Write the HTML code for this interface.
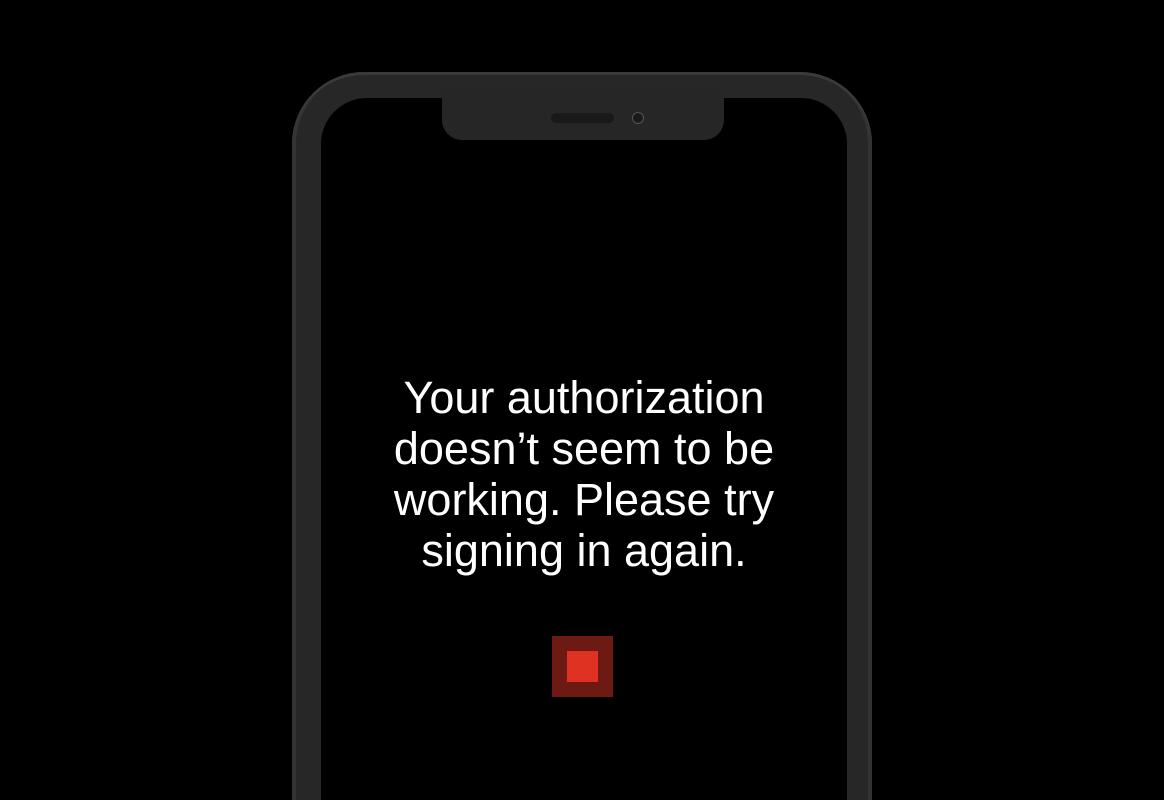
<!DOCTYPE html>
<html><head><style>
html,body{margin:0;padding:0;background:#000;width:1164px;height:800px;overflow:hidden;position:relative;font-family:"Liberation Sans",sans-serif}
.phone{position:absolute;left:292px;top:72px;width:580px;height:728px;border-radius:72px 72px 0 0;background:#272727;box-shadow:inset 0 3px 0 #3a3a3a, inset 4px 0 0 #333, inset -4px 0 0 #333}
.screen{position:absolute;left:321px;top:98px;width:526px;height:702px;background:#000;border-radius:46px 46px 0 0}
.notch{position:absolute;left:442px;top:90px;width:282px;height:50px;background:#262626;border-radius:0 0 20px 20px}
.spk{position:absolute;left:551px;top:113px;width:63px;height:10px;border-radius:5px;background:#191919}
.cam{position:absolute;left:632px;top:112px;width:10px;height:10px;border-radius:50%;background:#1a1a1a;border:1px solid #555}
.txt{position:absolute;left:321px;width:526px;top:372px;text-align:center;color:#fff;font-size:45px;line-height:51px;white-space:nowrap}
.r1{position:absolute;left:552px;top:636px;width:61px;height:61px;background:#6e1a14}
.r2{position:absolute;left:567px;top:651px;width:31px;height:31px;background:#e03222}
</style></head><body>
<div class="phone"></div>
<div class="screen"></div>
<div class="notch"></div>
<div class="spk"></div>
<div class="cam"></div>
<div class="txt">Your authorization<br>doesn’t seem to be<br>working. Please try<br>signing in again.</div>
<div class="r1"></div><div class="r2"></div>
</body></html>
